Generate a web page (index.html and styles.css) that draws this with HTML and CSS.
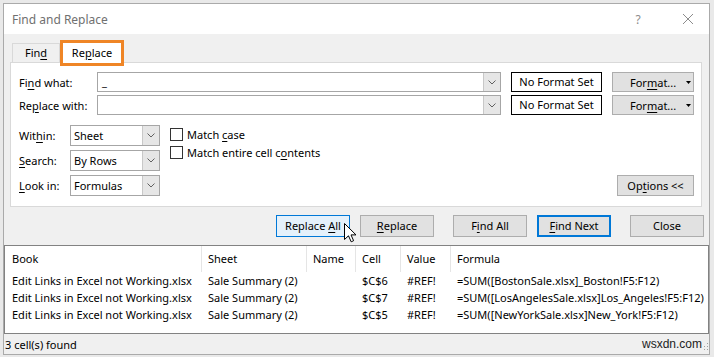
FILE: index.html
```html
<!DOCTYPE html>
<html lang="en">
<head>
  <meta charset="UTF-8" />
  <meta name="viewport" content="width=device-width, initial-scale=1.0"/>
  <title>Find and Replace</title>
  <link rel="stylesheet" href="styles.css">
</head>
<body>

  <div class="window">
    <div class="titlebar">
      <span class="title">Find and Replace</span>
      <span class="help">?</span>
      <svg class="x" width="12" height="12" viewBox="0 0 12 12"><path d="M1 1L11 11M11 1L1 11" stroke="#8c8c8c" stroke-width="1"/></svg>
    </div>

    <div class="dialog">
      <div class="tabs">
        <div class="tab">Fin<u>d</u></div>
        <div class="tab active">Re<u>p</u>lace</div>
      </div>

      <div class="panel">
        <div class="row">
          <span class="lbl">Fi<u>n</u>d what:</span>
          <div class="combo wide">
            <span class="val">_</span>
            <span class="drop"><svg width="8" height="5" viewBox="0 0 8 5"><path d="M0.5 0.5L4 4L7.5 0.5" fill="none" stroke="#606060"/></svg></span>
          </div>
          <div class="nofmt">No Format Set</div>
          <div class="btn fmt"><span>For<u>m</u>at...</span><svg class="tri" width="5" height="3" viewBox="0 0 5 3"><path d="M0 0H5L2.5 3Z" fill="#000"/></svg></div>
        </div>
        <div class="row">
          <span class="lbl">Re<u>p</u>lace with:</span>
          <div class="combo wide">
            <span class="val"></span>
            <span class="drop"><svg width="8" height="5" viewBox="0 0 8 5"><path d="M0.5 0.5L4 4L7.5 0.5" fill="none" stroke="#606060"/></svg></span>
          </div>
          <div class="nofmt">No Format Set</div>
          <div class="btn fmt"><span>For<u>m</u>at...</span><svg class="tri" width="5" height="3" viewBox="0 0 5 3"><path d="M0 0H5L2.5 3Z" fill="#000"/></svg></div>
        </div>

        <div class="opts">
          <div class="selects">
            <div class="srow">
              <span class="lbl short">Wit<u>h</u>in:</span>
              <div class="combo sel">
                <span class="val">Sheet</span>
                <span class="drop"><svg width="8" height="5" viewBox="0 0 8 5"><path d="M0.5 0.5L4 4L7.5 0.5" fill="none" stroke="#606060"/></svg></span>
              </div>
            </div>
            <div class="srow">
              <span class="lbl short"><u>S</u>earch:</span>
              <div class="combo sel">
                <span class="val">By Rows</span>
                <span class="drop"><svg width="8" height="5" viewBox="0 0 8 5"><path d="M0.5 0.5L4 4L7.5 0.5" fill="none" stroke="#606060"/></svg></span>
              </div>
            </div>
            <div class="srow">
              <span class="lbl short"><u>L</u>ook in:</span>
              <div class="combo sel">
                <span class="val">Formulas</span>
                <span class="drop"><svg width="8" height="5" viewBox="0 0 8 5"><path d="M0.5 0.5L4 4L7.5 0.5" fill="none" stroke="#606060"/></svg></span>
              </div>
            </div>
          </div>

          <div class="checks">
            <div class="check"><span class="box"></span><span>Match <u>c</u>ase</span></div>
            <div class="check"><span class="box"></span><span>Match entire cell c<u>o</u>ntents</span></div>
          </div>

          <div class="btn options">Op<u>t</u>ions &lt;&lt;</div>
        </div>
      </div>

      <div class="actions">
        <div class="btn act hover">Replace <u>A</u>ll
          <svg class="cursor" width="13" height="20" viewBox="0 0 13 20"><path d="M0.5 0.5V16.5L4.5 12.8L7.2 18.8L9.6 17.7L7 11.9H12Z" fill="#fff" stroke="#000" stroke-width="1" stroke-linejoin="round"/></svg>
        </div>
        <div class="btn act"><u>R</u>eplace</div>
        <div class="btn act group">F<u>i</u>nd All</div>
        <div class="btn act focus"><u>F</u>ind Next</div>
        <div class="btn act group">Close</div>
      </div>
    </div>

    <div class="results">
      <div class="grid head">
        <span>Book</span><span>Sheet</span><span>Name</span><span>Cell</span><span>Value</span><span>Formula</span>
      </div>
      <div class="grid">
        <span>Edit Links in Excel not Working.xlsx</span><span>Sale Summary (2)</span><span></span><span>$C$6</span><span>#REF!</span><span>=SUM([BostonSale.xlsx]_Boston!F5:F12)</span>
      </div>
      <div class="grid">
        <span>Edit Links in Excel not Working.xlsx</span><span>Sale Summary (2)</span><span></span><span>$C$7</span><span>#REF!</span><span>=SUM([LosAngelesSale.xlsx]Los_Angeles!F5:F12)</span>
      </div>
      <div class="grid">
        <span>Edit Links in Excel not Working.xlsx</span><span>Sale Summary (2)</span><span></span><span>$C$5</span><span>#REF!</span><span>=SUM([NewYorkSale.xlsx]New_York!F5:F12)</span>
      </div>
    </div>

    <div class="status">
      <span>3 cell(s) found</span>
      <span class="mark">wsxdn.com</span>
      <svg class="grip" width="6" height="10" viewBox="0 0 6 10"><path d="M4 1h1v1H4zM4 4h1v1H4zM1 4h1v1H1zM4 7h1v1H4zM1 7h1v1H1z" fill="#a0a0a0"/></svg>
    </div>
  </div>

</body>
</html>
```

FILE: styles.css
```css
* { box-sizing: border-box; }
body {
  margin: 0;
  background: #e9e9e9;
  font-family: "Noto Sans", sans-serif;
  font-size: 11px;
  color: #000;
}
u {
  text-decoration-thickness: 1px;
  text-underline-offset: 2px;
}
.window {
  width: 707px;
  height: 352px;
  margin: 3px 0 0 3px;
  border: 1px solid #aaaaaa;
  background: #f0f0f0;
  display: flex;
  flex-direction: column;
}

/* title bar */
.titlebar {
  height: 30px;
  flex: 0 0 30px;
  background: #fff;
  display: flex;
  align-items: center;
  padding-left: 8px;
}
.title {
  font-size: 12px;
  color: #707070;
}
.help {
  margin-left: auto;
  width: 12px;
  text-align: center;
  font-size: 12px;
  color: #8c8c8c;
}
.x {
  margin-left: 38px;
  margin-right: 15px;
}

/* dialog */
.dialog {
  padding: 6px 7px 8px 6px;
}
.tabs {
  display: flex;
  align-items: flex-end;
  height: 22px;
}
.tab {
  height: 19px;
  width: 48px;
  margin-left: 2px;
  border: 1px solid #d9d9d9;
  border-bottom: none;
  text-align: center;
  line-height: 18px;
}
.tab.active {
  width: 64px;
  height: 26px;
  margin-left: 0;
  margin-bottom: -4px;
  border: 3px solid #ef8526;
  background: #fff;
  line-height: 19px;
  position: relative;
  z-index: 1;
}
.panel {
  background: #fff;
  border: 1px solid #d9d9d9;
  padding: 9px 6px 10px 8px;
}
.row {
  display: flex;
  align-items: center;
  height: 20px;
}
.row + .row { margin-top: 3px; }
.lbl { width: 78px; }
.lbl.short { width: 51px; }
.combo {
  height: 20px;
  border: 1px solid #a6a6a6;
  background: #fff;
  display: flex;
}
.combo .val {
  flex: 1;
  padding-left: 4px;
  line-height: 18px;
}
.combo .drop {
  width: 17px;
  border-left: 1px solid #c8c8c8;
  background: #e6e6e6;
  display: flex;
  align-items: center;
  justify-content: center;
}
.wide { width: 404px; }
.nofmt {
  width: 91px;
  height: 20px;
  margin-left: 10px;
  border: 1px solid #000;
  text-align: center;
  line-height: 18px;
}
.btn {
  background: #e1e1e1;
  border: 1px solid #adadad;
  text-align: center;
}
.fmt {
  width: 82px;
  height: 20px;
  margin-left: 10px;
  display: flex;
  align-items: center;
  padding-left: 17px;
}
.tri { margin-left: 10px; }

.opts {
  display: flex;
  margin-top: 10px;
}
.selects {
  display: flex;
  flex-direction: column;
  gap: 4px;
}
.srow {
  display: flex;
  align-items: center;
  height: 21px;
}
.sel {
  width: 90px;
  height: 21px;
}
.sel .val {
  padding-left: 3px;
  line-height: 19px;
}
.checks { margin-left: 10px; }
.check {
  display: flex;
  align-items: center;
  height: 18px;
}
.box {
  width: 13px;
  height: 13px;
  border: 1px solid #333;
  background: #fff;
  margin-right: 4px;
}
.options {
  align-self: flex-end;
  margin-left: auto;
  margin-right: 1px;
  width: 77px;
  height: 21px;
  line-height: 19px;
}

/* buttons */
.actions {
  display: flex;
  justify-content: flex-end;
  margin: 8px -2px 0 0;
  height: 22px;
}
.act {
  width: 74px;
  height: 22px;
  line-height: 20px;
  margin-left: 10px;
}
.act.group { margin-left: 19px; }
.act.hover {
  background: #e5f1fb;
  border-color: #0078d7;
  position: relative;
}
.act.focus {
  border: 2px solid #0078d7;
  line-height: 18px;
}
.cursor {
  position: absolute;
  left: 67px;
  top: 7px;
}

/* results */
.results {
  flex: 0 0 89px;
  border: 1px solid #828282;
  background: #fff;
}
.grid {
  display: grid;
  grid-template-columns: 197px 105px 49px 45px 50px 1fr;
  height: 17px;
  line-height: 17px;
}
.grid span {
  padding-left: 6px;
  white-space: nowrap;
}
.grid span:first-child { padding-left: 7px; }
.head {
  height: 26px;
  line-height: 26px;
}
.head span { border-right: 1px solid #e5e5e5; }
.head span:last-child { border-right: none; }

.status {
  flex: 0 0 20px;
  display: flex;
  align-items: center;
  padding-left: 1px;
}
.mark {
  margin-left: auto;
  font-family: "Liberation Sans", Arial, sans-serif;
  font-size: 12px;
  color: #222;
}
.grip { margin: 6px 0 0 1px; }
```
